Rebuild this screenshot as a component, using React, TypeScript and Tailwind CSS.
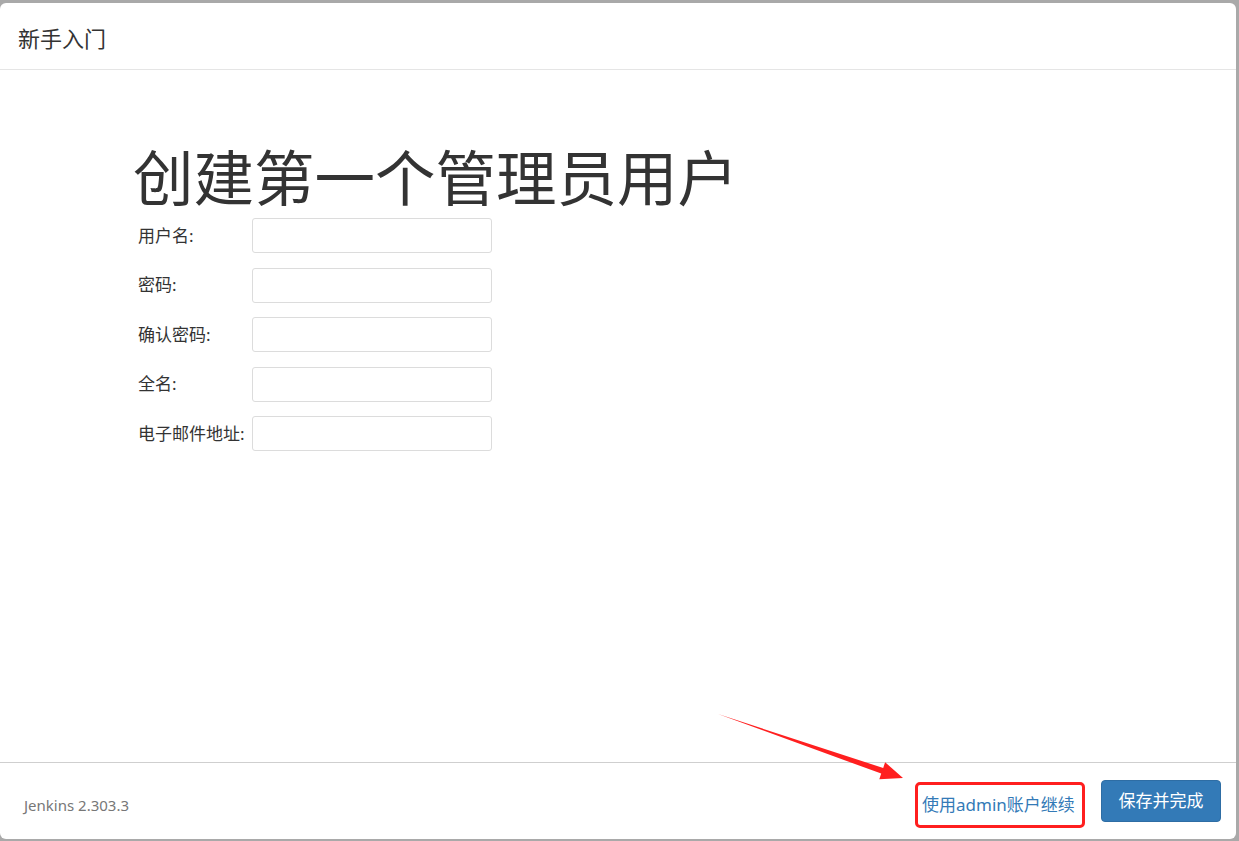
import React from "react";

const font = { fontFamily: '"Noto Sans", "Noto Sans CJK SC", sans-serif' };

const fields = ["用户名:", "密码:", "确认密码:", "全名:", "电子邮件地址:"];

export default function App() {
  return (
    <div
      className="relative w-[1239px] h-[841px] bg-[#a9a9a9] pt-[3px] pr-[3px] pb-[2px] overflow-hidden"
      style={font}
    >
      <div className="h-full bg-white rounded-[6px] flex flex-col text-[#333]">
        <div className="h-[67px] shrink-0 border-b border-[#e5e5e5] flex items-center pl-[18px] pt-[4px] text-[22px]">
          新手入门
        </div>
        <div className="flex-1 pl-[133px] pt-[75px]">
          <h1 className="text-[60.5px] leading-[66px] font-normal text-[#333]">创建第一个管理员用户</h1>
          <div className="mt-[7px] flex flex-col gap-[14.5px]">
            {fields.map((f) => (
              <div key={f} className="flex items-center">
                <label className="w-[119px] pl-[5px] text-[17px] leading-[20px] whitespace-nowrap">{f}</label>
                <input
                  type={f.startsWith("密码") || f.startsWith("确认") ? "password" : "text"}
                  className="w-[240px] h-[35px] border border-[#dcdcdc] rounded-[3px] bg-white outline-none"
                />
              </div>
            ))}
          </div>
        </div>
        <div className="h-[77px] shrink-0 border-t border-[#cfcfcf] flex items-center pl-[24px] pr-[15px]">
          <span className="text-[15px] text-[#777] mt-[8px]">Jenkins 2.303.3</span>
          <div className="ml-auto flex items-center gap-[16px]">
            <div className="w-[170px] h-[46px] mt-[8px] border-[3px] border-[#ff1f1f] rounded-[5px] flex items-center pl-[4px]">
              <a className="text-[17px] text-[#337ab7] whitespace-nowrap cursor-pointer">使用admin账户继续</a>
            </div>
            <button className="w-[120px] h-[42px] bg-[#337ab7] border border-[#2e6da4] rounded-[4px] text-white text-[17px]">
              保存并完成
            </button>
          </div>
        </div>
      </div>
      <svg className="absolute left-0 top-0 pointer-events-none" width="1239" height="841">
        <polygon
          points="718,714 883.2,768 885.1,762.3 903,778 879.3,779.3 881.2,773.6"
          fill="#ff1f1f"
        />
      </svg>
    </div>
  );
}
